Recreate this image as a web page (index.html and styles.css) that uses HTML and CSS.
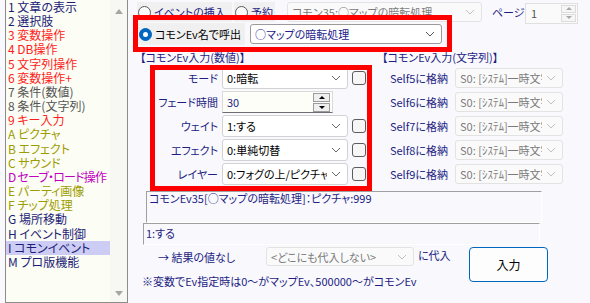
FILE: index.html
```html
<!DOCTYPE html>
<html lang="ja">
<head>
  <meta charset="UTF-8">
  <title>コモンイベント</title>
  <link rel="stylesheet" href="styles.css">
</head>
<body>
  <div class="window">
    <!-- コマンド一覧 -->
    <div class="cmd-list">
      <ul class="cmd-items">
        <li class="c-navy">1 文章の表示</li>
        <li class="c-navy">2 選択肢</li>
        <li class="c-red">3 変数操作</li>
        <li class="c-red">4 DB操作</li>
        <li class="c-red">5 文字列操作</li>
        <li class="c-red">6 変数操作+</li>
        <li class="c-gray">7 条件(数値)</li>
        <li class="c-gray">8 条件(文字列)</li>
        <li class="c-red">9 キー入力</li>
        <li class="c-olive">A ピクチャ</li>
        <li class="c-olive">B エフェクト</li>
        <li class="c-olive">C サウンド</li>
        <li class="c-magenta tight">D セーブ・ロード操作</li>
        <li class="c-olive">E パーティ画像</li>
        <li class="c-olive">F チップ処理</li>
        <li class="c-navy">G 場所移動</li>
        <li class="c-navy">H イベント制御</li>
        <li class="c-navy selected">I コモンイベント</li>
        <li class="c-navy">M プロ版機能</li>
      </ul>
      <div class="list-scroll">
        <span class="arrow up"></span>
        <span class="arrow down"></span>
      </div>
    </div>

    <div class="editor">
      <div class="call-row">
        <div class="radio-item opt-insert"><span class="radio"></span>イベントの挿入</div>
        <div class="radio-item opt-reserve"><span class="radio"></span>予約</div>
        <div class="combo disabled top-combo">
          <span class="combo-text">コモン35:○マップの暗転処理</span>
          <svg class="chev" width="10" height="6" viewBox="0 0 10 6"><polyline points="1,1 5,5 9,1" fill="none" stroke="currentColor"/></svg>
        </div>
        <span class="page-label">ページ</span>
        <div class="page-spin">
          <span class="spin-value">1</span>
          <div class="spin-btns light">
            <span class="spin-btn"><span class="tri up"></span></span>
            <span class="spin-btn"><span class="tri down"></span></span>
          </div>
        </div>
      </div>

      <div class="name-row">
        <div class="radio-item opt-name"><span class="radio on"></span>コモンEv名で呼出</div>
        <div class="combo name-combo">
          <span class="combo-text">○マップの暗転処理</span>
          <svg class="chev" width="10" height="6" viewBox="0 0 10 6"><polyline points="1,1 5,5 9,1" fill="none" stroke="currentColor"/></svg>
        </div>
      </div>

      <div class="params">
        <div class="param-col num">
          <div class="col-title">【コモンEv入力(数値)】</div>
          <div class="param-grid">
            <span class="p-label">モード</span>
            <div class="combo sel"><span class="combo-text">0:暗転</span><svg class="chev" width="10" height="6" viewBox="0 0 10 6"><polyline points="1,1 5,5 9,1" fill="none" stroke="currentColor"/></svg></div>
            <span class="check"></span>

            <span class="p-label">フェード時間</span>
            <div class="num-field">
              <span class="num-value">30</span>
              <div class="spin-btns">
                <span class="spin-btn"><span class="tri up"></span></span>
                <span class="spin-btn"><span class="tri down"></span></span>
              </div>
            </div>
            <span></span>

            <span class="p-label">ウェイト</span>
            <div class="combo sel"><span class="combo-text">1:する</span><svg class="chev" width="10" height="6" viewBox="0 0 10 6"><polyline points="1,1 5,5 9,1" fill="none" stroke="currentColor"/></svg></div>
            <span class="check"></span>

            <span class="p-label">エフェクト</span>
            <div class="combo sel"><span class="combo-text">0:単純切替</span><svg class="chev" width="10" height="6" viewBox="0 0 10 6"><polyline points="1,1 5,5 9,1" fill="none" stroke="currentColor"/></svg></div>
            <span class="check"></span>

            <span class="p-label">レイヤー</span>
            <div class="combo sel"><span class="combo-text">0:フォグの上/ピクチャの下</span><svg class="chev" width="10" height="6" viewBox="0 0 10 6"><polyline points="1,1 5,5 9,1" fill="none" stroke="currentColor"/></svg></div>
            <span class="check"></span>
          </div>
        </div>

        <div class="param-col str">
          <div class="col-title">【コモンEv入力(文字列)】</div>
          <div class="param-grid str-grid">
            <span class="p-label">Self5に格納</span>
            <div class="combo disabled str-sel"><span class="combo-text">S0: [ｼｽﾃﾑ]一時文字列</span><svg class="chev" width="10" height="6" viewBox="0 0 10 6"><polyline points="1,1 5,5 9,1" fill="none" stroke="currentColor"/></svg></div>
            <span class="p-label">Self6に格納</span>
            <div class="combo disabled str-sel"><span class="combo-text">S0: [ｼｽﾃﾑ]一時文字列</span><svg class="chev" width="10" height="6" viewBox="0 0 10 6"><polyline points="1,1 5,5 9,1" fill="none" stroke="currentColor"/></svg></div>
            <span class="p-label">Self7に格納</span>
            <div class="combo disabled str-sel"><span class="combo-text">S0: [ｼｽﾃﾑ]一時文字列</span><svg class="chev" width="10" height="6" viewBox="0 0 10 6"><polyline points="1,1 5,5 9,1" fill="none" stroke="currentColor"/></svg></div>
            <span class="p-label">Self8に格納</span>
            <div class="combo disabled str-sel"><span class="combo-text">S0: [ｼｽﾃﾑ]一時文字列</span><svg class="chev" width="10" height="6" viewBox="0 0 10 6"><polyline points="1,1 5,5 9,1" fill="none" stroke="currentColor"/></svg></div>
            <span class="p-label">Self9に格納</span>
            <div class="combo disabled str-sel"><span class="combo-text">S0: [ｼｽﾃﾑ]一時文字列</span><svg class="chev" width="10" height="6" viewBox="0 0 10 6"><polyline points="1,1 5,5 9,1" fill="none" stroke="currentColor"/></svg></div>
          </div>
        </div>
      </div>

      <div class="memo memo-main">コモンEv35[○マップの暗転処理]：ピクチャ:999</div>
      <div class="memo memo-sub">1:する</div>

      <div class="bottom">
        <div class="bottom-left">
          <div class="result-row">
            <span class="result-label">→ 結果の値なし</span>
            <div class="combo disabled result-combo">
              <span class="combo-text">&lt;どこにも代入しない&gt;</span>
              <svg class="chev" width="10" height="6" viewBox="0 0 10 6"><polyline points="1,1 5,5 9,1" fill="none" stroke="currentColor"/></svg>
            </div>
            <span class="assign">に代入</span>
          </div>
          <div class="note">※変数でEv指定時は0～がマップEv、500000～がコモンEv</div>
        </div>
        <button class="enter-button">入力</button>
      </div>

      <!-- 注目枠 -->
      <div class="mark mark-name"></div>
      <div class="mark mark-params"></div>
    </div>
  </div>
</body>
</html>
```

FILE: styles.css
```css
* {
  box-sizing: border-box;
}

body {
  margin: 0;
  width: 590px;
  height: 303px;
  overflow: hidden;
  background: #f8f8fd;
  font-family: "Noto Sans CJK JP", "Noto Sans", sans-serif;
  font-size: 11px;
  color: #1e1e82;
  font-feature-settings: "palt";
}

.window {
  display: flex;
  height: 303px;
}

/* コマンド一覧 */
.cmd-list {
  display: flex;
  width: 123px;
  height: 303px;
  margin-left: 5px;
  border: 1px solid #8c8c8c;
  border-top: none;
  background: #fcfdf4;
}

.cmd-items {
  list-style: none;
  margin: 0;
  padding: 0;
  width: 104px;
  font-size: 12px;
}

.cmd-items li {
  height: 14.17px;
  line-height: 14.17px;
  padding-left: 2px;
  white-space: nowrap;
}

.cmd-items li.tight {
  letter-spacing: -0.8px;
}

.cmd-items li.selected {
  background: #ccccf4;
}

.c-navy { color: #1e1e78; }
.c-red { color: #ff1e1e; }
.c-gray { color: #555555; }
.c-olive { color: #9c9c00; }
.c-magenta { color: #c000c0; }

.list-scroll {
  flex: 1;
  display: flex;
  flex-direction: column;
  justify-content: space-between;
  align-items: center;
  padding: 9px 0 6px;
  background: #f7f7f3;
}

.arrow {
  width: 0;
  height: 0;
  border-left: 4px solid transparent;
  border-right: 4px solid transparent;
}

.arrow.up {
  border-bottom: 5px solid #a6a6a6;
}

.arrow.down {
  border-top: 5px solid #a6a6a6;
}

/* 編集エリア */
.editor {
  position: relative;
  flex: 1;
  padding-top: 2px;
}

.call-row {
  display: flex;
  align-items: center;
  height: 20px;
  margin-left: 9px;
}

.radio-item {
  display: flex;
  align-items: center;
  gap: 3px;
  height: 20px;
  padding-left: 1px;
  background: #f0f0f0;
  white-space: nowrap;
}

.radio {
  width: 13px;
  height: 13px;
  border-radius: 50%;
  border: 1px solid #5a5a5a;
  background: #fbfbfb;
  display: flex;
  align-items: center;
  justify-content: center;
  flex-shrink: 0;
}

.radio.on {
  background: #0067c0;
  border-color: #0067c0;
}

.radio.on::after {
  content: "";
  width: 5px;
  height: 5px;
  border-radius: 50%;
  background: white;
}

.opt-insert {
  width: 95px;
}

.opt-reserve {
  width: 41px;
  margin-left: 2px;
}

.combo {
  display: flex;
  align-items: center;
  height: 20px;
  padding: 0 6px 0 4px;
  border: 1px solid #bdbdbd;
  border-radius: 3px;
  background: white;
  color: #000;
}

.combo-text {
  flex: 1;
  overflow: hidden;
  white-space: nowrap;
}

.chev {
  flex-shrink: 0;
  margin-left: 4px;
  color: #666;
}

.combo.disabled {
  background: #fafafa;
  border-color: #e3e3e3;
  color: #7c7c7c;
}

.combo.disabled .chev {
  color: #c0c0c0;
}

.top-combo {
  width: 195px;
  margin-left: 12px;
}

.page-label {
  width: 33px;
  margin-left: 10px;
  white-space: nowrap;
}

.page-spin {
  display: flex;
  align-items: center;
  width: 53px;
  height: 21px;
  margin-top: 2px;
  padding-left: 5px;
  border: 1px solid #e0e0e0;
  background: #fafafa;
  color: #555;
}

.spin-value {
  flex: 1;
}

.spin-btns {
  display: flex;
  flex-direction: column;
  gap: 1px;
  margin-right: 1px;
}

.spin-btn {
  display: flex;
  align-items: center;
  justify-content: center;
  width: 15px;
  height: 8px;
  border: 1px solid #9c9c9c;
  background: #f0f0f0;
}

.spin-btns.light .spin-btn {
  border-color: #dcdcdc;
  background: #f6f6f6;
}

.tri {
  width: 0;
  height: 0;
  border-left: 3px solid transparent;
  border-right: 3px solid transparent;
}

.tri.up {
  border-bottom: 3px solid #000;
}

.tri.down {
  border-top: 3px solid #000;
}

.spin-btns.light .tri.up {
  border-bottom-color: #a8a8a8;
}

.spin-btns.light .tri.down {
  border-top-color: #a8a8a8;
}

.name-row {
  display: flex;
  align-items: center;
  height: 24px;
  margin-left: 10px;
}

.opt-name {
  width: 107px;
  height: 22px;
  color: #000;
}

.name-combo {
  width: 192px;
  margin-left: 5px;
  border-color: #9a9a9a;
  color: #22228a;
}

.name-combo .chev {
  color: #555;
}

/* 入力パラメータ */
.params {
  display: flex;
  margin-top: 5px;
}

.param-col.num {
  width: 240px;
  margin-left: 12px;
}

.col-title {
  height: 12px;
  line-height: 12px;
  white-space: nowrap;
}

.param-col.str .col-title {
  padding-left: 2px;
}

.param-grid {
  display: grid;
  grid-template-columns: 68px 126px 14px;
  grid-auto-rows: 24px;
  column-gap: 4px;
  align-items: center;
  margin-top: 3px;
  margin-left: 10px;
}

.str-grid {
  grid-template-columns: 68px 108px;
  column-gap: 7px;
  margin-left: 0;
}

.p-label {
  text-align: right;
  white-space: nowrap;
}

.combo.sel {
  height: 22px;
  border-color: #d2d2d2;
}

.check {
  width: 14px;
  height: 14px;
  border: 1px solid #5c5c5c;
  border-radius: 3px;
  background: #f6f6f6;
}

.num-field {
  display: flex;
  align-items: center;
  width: 111px;
  height: 22px;
  padding-left: 4px;
  border: 1px solid #dadada;
  border-bottom-color: #6e6e6e;
  background: #fefef8;
}

.num-value {
  flex: 1;
}

.num-field .spin-btns {
  margin-right: 2px;
}

.num-field .spin-btn {
  width: 17px;
  height: 9px;
}

.str-sel {
  height: 20px;
}

/* メモ欄 */
.memo {
  border-top: 1px solid #a0a0a0;
  border-left: 1px solid #a0a0a0;
  border-right: 1px solid #ffffff;
  border-bottom: 1px solid #ffffff;
  padding: 0 2px;
  line-height: 12px;
  white-space: nowrap;
}

.memo-main {
  width: 396px;
  height: 32px;
  margin-top: 5px;
  margin-left: 18px;
}

.memo-sub {
  width: 397px;
  height: 22px;
  margin-left: 15px;
  padding-top: 3px;
}

/* 結果・入力ボタン */
.bottom {
  display: flex;
  margin-top: 2px;
  margin-left: 14px;
}

.bottom-left {
  width: 320px;
}

.result-row {
  display: flex;
  align-items: center;
  height: 19px;
  padding-left: 16px;
}

.result-label {
  width: 108px;
  white-space: nowrap;
}

.result-combo {
  width: 148px;
  height: 19px;
}

.assign {
  margin-left: 4px;
  margin-top: -3px;
  white-space: nowrap;
}

.note {
  margin-top: 9px;
  line-height: 12px;
  white-space: nowrap;
}

.enter-button {
  width: 79px;
  height: 35px;
  margin-left: 7px;
  border: 1px solid #0067c0;
  border-radius: 4px;
  background: #fdfdfd;
  font-family: inherit;
  font-size: 12px;
  color: #000;
}

/* 注目枠 */
.mark {
  position: absolute;
  border: 5px solid #ff0000;
  pointer-events: none;
}

.mark-name {
  left: 5px;
  top: 15px;
  width: 319px;
  height: 37px;
}

.mark-params {
  left: 22px;
  top: 65px;
  width: 222px;
  height: 126px;
}
```
